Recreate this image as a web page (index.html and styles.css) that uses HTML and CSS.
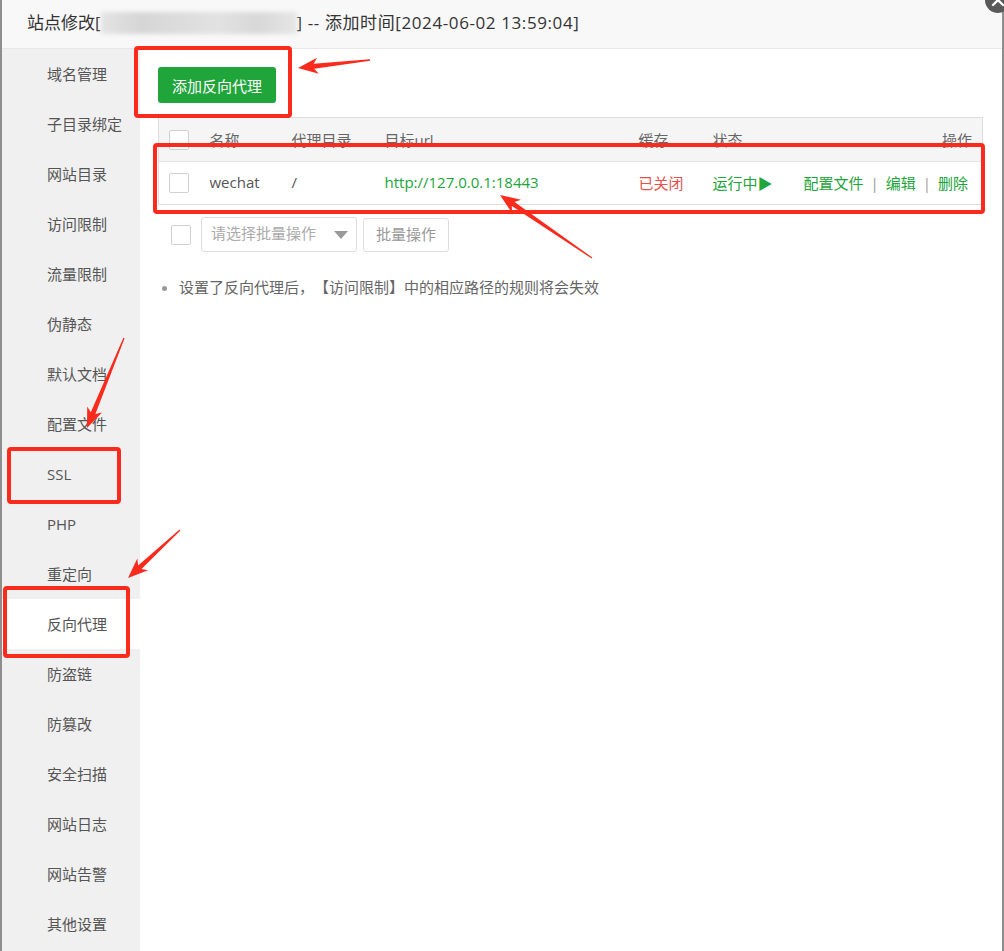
FILE: index.html
```html
<!DOCTYPE html>
<html lang="zh-CN">
  <head>
    <meta charset="UTF-8" />
    <meta name="viewport" content="width=device-width, initial-scale=1.0" />
    <title>站点修改</title>
    <link rel="stylesheet" href="styles.css">
  </head>
  <body>
    <div class="layer">
      <div class="layer-title">
        站点修改[<span class="mosaic"></span><span class="time">] -- 添加时间[2024-06-02 13:59:04]</span>
      </div>
      <span class="layer-close">
        <svg width="26" height="26" viewBox="0 0 26 26">
          <circle cx="13" cy="13" r="13" fill="#595959" />
          <path d="M8 8 L18 18 M18 8 L8 18" stroke="#fff" stroke-width="2.4" stroke-linecap="round" />
        </svg>
      </span>
      <div class="layer-body">
        <ul class="side">
          <li>域名管理</li>
          <li>子目录绑定</li>
          <li>网站目录</li>
          <li>访问限制</li>
          <li>流量限制</li>
          <li>伪静态</li>
          <li>默认文档</li>
          <li>配置文件</li>
          <li>SSL</li>
          <li>PHP</li>
          <li>重定向</li>
          <li class="active">反向代理</li>
          <li>防盗链</li>
          <li>防篡改</li>
          <li>安全扫描</li>
          <li>网站日志</li>
          <li>网站告警</li>
          <li>其他设置</li>
        </ul>
        <div class="main">
          <button class="btn-green">添加反向代理</button>
          <table class="proxy-table">
            <colgroup>
              <col style="width: 41px" />
              <col style="width: 82px" />
              <col style="width: 93px" />
              <col style="width: 254px" />
              <col style="width: 74px" />
              <col style="width: 93px" />
              <col />
            </colgroup>
            <thead>
              <tr>
                <th><span class="check"></span></th>
                <th>名称</th>
                <th>代理目录</th>
                <th>目标url</th>
                <th>缓存</th>
                <th>状态</th>
                <th class="right">操作</th>
              </tr>
            </thead>
            <tbody>
              <tr>
                <td><span class="check"></span></td>
                <td>wechat</td>
                <td>/</td>
                <td class="green">http://127.0.0.1:18443</td>
                <td class="red">已关闭</td>
                <td class="green">运行中▶</td>
                <td class="right ops"><a>配置文件</a><span class="sep">|</span><a>编辑</a><span class="sep">|</span><a>删除</a></td>
              </tr>
            </tbody>
          </table>
          <div class="batch">
            <span class="check"></span>
            <div class="select">请选择批量操作<i class="caret"></i></div>
            <button class="btn-plain">批量操作</button>
          </div>
          <ul class="tips">
            <li>设置了反向代理后，【访问限制】中的相应路径的规则将会失效</li>
          </ul>
        </div>
      </div>
    </div>

    <!-- screenshot annotations -->
    <div class="mark mark-btn"></div>
    <div class="mark mark-row"></div>
    <div class="mark mark-ssl"></div>
    <div class="mark mark-proxy"></div>
    <svg class="arrows" width="1004" height="951" viewBox="0 0 1004 951">
      <polygon points="369.9,59.3 313.6,63.7 317,57.8 298,68 318.8,73.8 314.2,68.7 370.1,60.7" />
      <polygon points="592.3,257.5 514.6,201.9 521,199.7 500,195 512,212.9 511.8,206.1 591.7,258.5" />
      <polygon points="123.4,337.8 90.8,412.3 87.2,406.5 87,428 102,412.5 95.4,414.1 124.6,338.2" />
      <polygon points="179.6,529.6 138.1,565.4 137.3,558.5 128,578 148.1,570.3 141.5,569 180.4,530.4" />
    </svg>
  </body>
</html>
```

FILE: styles.css
```css
* {
  box-sizing: border-box;
}

body {
  margin: 0;
  position: relative;
  width: 1004px;
  height: 951px;
  overflow: hidden;
  background: #8e8e8e;
  font-family: "Open Sans", "Noto Sans CJK SC", sans-serif;
  color: #555;
  text-spacing-trim: space-all;
}

.layer {
  margin-left: 2px;
  width: 1000px;
  height: 951px;
  background: #fff;
  display: flex;
  flex-direction: column;
}

.layer-title {
  height: 49px;
  line-height: 46px;
  padding-left: 25px;
  background: #f8f8f8;
  border-bottom: 1px solid #e8e8e8;
  font-size: 17px;
  color: #333;
}

.layer-title .time {
  letter-spacing: 0.6px;
}

.mosaic {
  display: inline-block;
  width: 196px;
  height: 22px;
  vertical-align: -5px;
  background: linear-gradient(90deg, #e4e4e4 0%, #d6d6d6 20%, #dcdcdc 40%, #e2e2e2 60%, #d8d8d8 80%, #e6e6e6 100%);
  filter: blur(2px);
}

.layer-close {
  position: absolute;
  left: 985px;
  top: -13px;
}

.layer-body {
  flex: 1;
  display: flex;
}

.side {
  width: 138px;
  margin: 0;
  padding: 0;
  list-style: none;
  background: #f0f0f0;
}

.side li {
  height: 50px;
  line-height: 51px;
  padding-left: 45px;
  font-size: 15px;
  color: #555;
}

.side li.active {
  background: #fff;
}

.main {
  flex: 1;
  padding: 18px 18px 0 18px;
}

.btn-green {
  display: block;
  height: 36px;
  padding: 0 14px;
  border: 0;
  border-radius: 3px;
  background: #20a53a;
  color: #fff;
  font-family: inherit;
  font-size: 15px;
}

.proxy-table {
  margin-top: 14px;
  width: 825px;
  table-layout: fixed;
  border-collapse: collapse;
  border: 1px solid #ddd;
  font-size: 15px;
}

.proxy-table th,
.proxy-table td {
  padding: 0 10px;
  text-align: left;
  white-space: nowrap;
}

.proxy-table th {
  height: 44px;
  font-weight: normal;
  color: #666;
  background: #f5f5f5;
  border-bottom: 1px solid #e4e4e4;
}

.proxy-table td {
  height: 43px;
  padding-bottom: 2px;
  color: #555;
}

.proxy-table .right {
  text-align: right;
}

.proxy-table td.ops {
  padding-left: 0;
  padding-right: 14px;
}

.check {
  display: inline-block;
  width: 20px;
  height: 20px;
  vertical-align: middle;
  background: #fff;
  border: 1px solid #d0d0d0;
  border-radius: 2px;
}

.proxy-table td.green,
.ops a {
  color: #20a53a;
}

.proxy-table td.red {
  color: #e85050;
}

.sep {
  color: #999;
  margin: 0 7px;
}

.batch {
  display: flex;
  align-items: center;
  gap: 10px;
  margin-top: 12px;
  padding-left: 13px;
}

.select {
  position: relative;
  width: 156px;
  height: 35px;
  line-height: 31px;
  padding-left: 9px;
  border: 1px solid #ddd;
  border-radius: 3px;
  font-size: 15px;
  color: #aaa;
}

.caret {
  position: absolute;
  right: 8px;
  top: 13px;
  border-left: 7px solid transparent;
  border-right: 7px solid transparent;
  border-top: 8px solid #999;
}

.btn-plain {
  height: 34px;
  margin-left: -4px;
  padding: 0 12px 2px;
  border: 1px solid #ddd;
  border-radius: 3px;
  background: #fff;
  color: #999;
  font-family: inherit;
  font-size: 15px;
}

.tips {
  margin: 24px 0 0 0;
  padding-left: 21px;
  font-size: 15px;
  color: #666;
}

.tips li::marker {
  color: #999;
}

.mark {
  position: absolute;
  border: 4px solid #fa2a1c;
  border-radius: 4px;
}

.mark-btn {
  left: 134px;
  top: 46px;
  width: 158px;
  height: 72px;
}

.mark-row {
  left: 153px;
  top: 143px;
  width: 832px;
  height: 71px;
}

.mark-ssl {
  left: 7px;
  top: 447px;
  width: 114px;
  height: 57px;
}

.mark-proxy {
  left: 3px;
  top: 586px;
  width: 127px;
  height: 72px;
}

.arrows {
  position: absolute;
  left: 0;
  top: 0;
  pointer-events: none;
}

.arrows polygon {
  fill: #fa2a1c;
}
```
